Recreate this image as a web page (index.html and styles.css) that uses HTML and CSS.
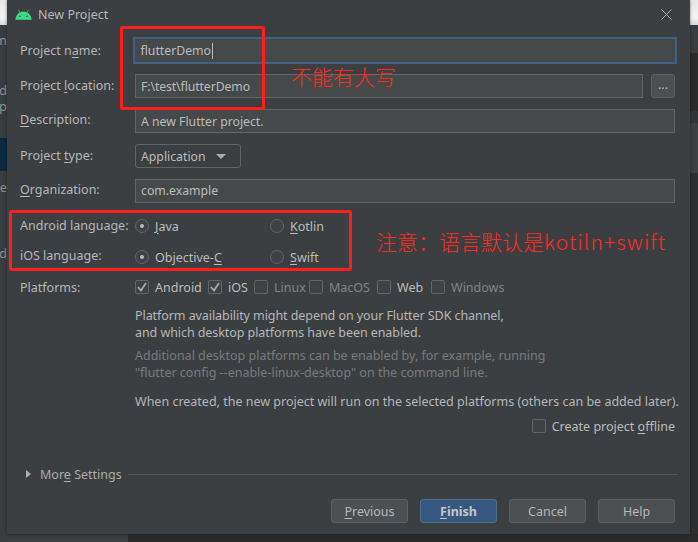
FILE: index.html
```html
<!DOCTYPE html>
<html lang="en">
<head>
<meta charset="utf-8">
<title>New Project</title>
<link rel="stylesheet" href="styles.css">
</head>
<body>
<div class="backdrop">
  <div class="strip strip-left">
    <div class="band band-light"></div>
    <div class="band band-a"><span class="clip c1">m</span></div>
    <div class="band band-b"><span class="clip c2">d</span><span class="clip c3">ip</span></div>
    <div class="band band-sel"></div>
    <div class="band band-c"><span class="clip c4">e</span><span class="clip c5">d</span></div>
  </div>
  <div class="strip strip-right">
    <div class="band band-light"></div>
    <div class="band r1"></div>
    <div class="band r2"></div>
    <div class="band r3"></div>
    <div class="band r4"></div>
    <div class="band r5"></div>
  </div>
  <div class="strip-bottom"></div>
</div>

<main class="dialog">
  <header class="titlebar">
    <svg class="android" width="17" height="11" viewBox="0 0 17 11"><path fill="#3ddc84" d="M0.3 10.8C0.6 7.6 2.2 5 4.7 3.6L3.3 1.1 3.8 0.8 5.3 3.3C6.3 2.9 7.4 2.6 8.5 2.6S10.7 2.9 11.7 3.3L13.2 0.8 13.7 1.1 12.3 3.6C14.8 5 16.4 7.6 16.7 10.8Z"/><circle cx="5" cy="7.2" r=".8" fill="#3c3f41"/><circle cx="12" cy="7.2" r=".8" fill="#3c3f41"/></svg>
    <span class="title">New Project</span>
    <svg class="close" width="11" height="11" viewBox="0 0 11 11"><path d="M.5.5l10 10M10.5.5l-10 10" stroke="#a4a6a8" stroke-width="1" fill="none"/></svg>
  </header>

  <div class="form">
    <div class="row row-name">
      <label class="label">Project n<u>a</u>me:</label>
      <div class="field field-focus"><span class="value">flutterDemo</span><span class="caret"></span></div>
    </div>
    <div class="row row-loc">
      <label class="label">Project <u>l</u>ocation:</label>
      <div class="with-browse">
        <div class="field"><span class="value value-path">F:\test\flutterDemo</span></div>
        <button class="browse">...</button>
      </div>
    </div>
    <div class="row row-std">
      <label class="label label-up"><u>D</u>escription:</label>
      <div class="field"><span class="value">A new Flutter project.</span></div>
    </div>
    <div class="row row-std">
      <label class="label">Project <u>t</u>ype:</label>
      <div class="combo"><span class="value">Application</span><span class="arrow"></span></div>
    </div>
    <div class="row row-std">
      <label class="label label-up"><u>O</u>rganization:</label>
      <div class="field field-up"><span class="value">com.example</span></div>
    </div>
    <div class="row row-radio">
      <label class="label">Android language:</label>
      <div class="radios">
        <span class="radio"><i class="dot on"></i><span><u>J</u>ava</span></span>
        <span class="radio"><i class="dot"></i><span><u>K</u>otlin</span></span>
      </div>
    </div>
    <div class="row row-radio2">
      <label class="label label-up">iOS language:</label>
      <div class="radios">
        <span class="radio"><i class="dot on"></i><span>Objective-<u>C</u></span></span>
        <span class="radio"><i class="dot"></i><span><u>S</u>wift</span></span>
      </div>
    </div>
    <div class="row row-plat">
      <label class="label label-down">Platforms:</label>
      <div class="checks">
        <span class="check"><i class="box"><svg width="14" height="14" viewBox="0 0 14 14"><path d="M3 7l3 3.5L11 3" stroke="#a9abad" stroke-width="1.7" fill="none"/></svg></i>Android</span>
        <span class="check"><i class="box"><svg width="14" height="14" viewBox="0 0 14 14"><path d="M3 7l3 3.5L11 3" stroke="#a9abad" stroke-width="1.7" fill="none"/></svg></i>iOS</span>
        <span class="check muted-check"><i class="box"></i>Linux</span>
        <span class="check muted-check"><i class="box"></i>MacOS</span>
        <span class="check"><i class="box"></i>Web</span>
        <span class="check muted-check"><i class="box"></i>Windows</span>
      </div>
    </div>
    <div class="notes">
      <p class="note note-first">Platform availability might depend on your Flutter SDK channel,<br>and which desktop platforms have been enabled.</p>
      <p class="note note-dim">Additional desktop platforms can be enabled by, for example, running<br>"flutter config --enable-linux-desktop" on the command line.</p>
      <p class="note note-wide">When created, the new project will run on the selected platforms (others can be added later).</p>
    </div>
    <div class="offline"><span class="check"><i class="box"></i><span>Create project <u>o</u>ffline</span></span></div>
  </div>

  <div class="more">
    <span class="tri"></span>
    <span class="more-text">Mor<u>e</u> Settings</span>
    <span class="rule"></span>
  </div>

  <footer class="actions">
    <button class="btn"><u>P</u>revious</button>
    <button class="btn btn-primary"><u>F</u>inish</button>
    <button class="btn">Cancel</button>
    <button class="btn">Help</button>
  </footer>
</main>

<div class="mark mark-one"></div>
<div class="mark mark-two"></div>
<div class="note-red note-one">不能有大写</div>
<div class="note-red note-two">注意：语言默认是<span class="note-latin">kotiln+swift</span></div>
</body>
</html>
```

FILE: styles.css
```css
* { box-sizing: border-box; }
html, body { margin: 0; height: 100%; }
body {
  position: relative;
  width: 698px;
  height: 542px;
  overflow: hidden;
  padding: 0 8px 8px 7px;
  background: #2b2b2b;
  font: 12.5px/17px "Noto Sans", sans-serif;
  color: #bbbbbb;
}
u { text-underline-offset: 2px; text-decoration-thickness: 1px; }
i { font-style: normal; }

/* window behind the dialog */
.backdrop { position: absolute; inset: 0; }
.strip { position: absolute; top: 0; bottom: 8px; width: 8px; display: flex; flex-direction: column; overflow: hidden; }
.strip-left { left: 0; }
.strip-right { right: 0; }
.band { position: relative; flex: none; }
.band-light { height: 25px; background: linear-gradient(#e8e8e8, #f4f4f4 70%, #d9d9d9); }
.band-a { height: 53px; background: #3a3d3f; }
.band-b { height: 60px; background: #3a3d3f; }
.band-sel { height: 33px; background: #0d293e; }
.band-c { flex: 1; background: #3a3d3f; }
.clip { position: absolute; right: 1px; font-size: 13px; line-height: 13px; color: #8d8f91; }
.c1 { top: 9px; }
.c2 { top: 6px; }
.c3 { top: 22px; }
.c4 { top: 10px; }
.c5 { top: 76px; }
.r1 { height: 28px; background: #3a3d3f; }
.r2 { height: 58px; background: #2b2b2b; }
.r3 { height: 12px; background: #323537; }
.r4 { height: 50px; background: #3d4042; }
.r5 { flex: 1; background: #2e2f31; }
.strip-bottom { position: absolute; left: 0; bottom: 0; width: 128px; height: 8px; background: #3a3d3f; }

/* dialog */
.dialog {
  position: relative;
  height: 534px;
  background: #3c3f41;
  box-shadow: 0 0 3px rgba(0, 0, 0, .45);
  display: flex;
  flex-direction: column;
}
.titlebar { height: 37px; padding: 9px 18px 0 8px; display: flex; align-items: flex-start; flex: none; }
.title { margin: -3px 0 0 6px; color: #b4b6b8; }
.close { margin-left: auto; }

.form { padding: 0 15px 0 13px; flex: none; }
.row { display: grid; grid-template-columns: 115px 1fr; align-items: center; }
.row-name { height: 27px; margin-right: -2px; }
.row-loc { height: 24px; margin-top: 10px; }
.row-std { height: 24px; margin-top: 11px; }
.row-radio { height: 24px; margin-top: 11px; }
.row-radio2 { height: 24px; margin-top: 7px; }
.row-plat { height: 24px; margin-top: 6px; }
.label { white-space: nowrap; color: #b4b6b8; margin-top: -1px; }
.label-up { margin-top: -3px; }
.label-down { margin-top: 1px; }

.field {
  height: 24px;
  display: flex;
  align-items: center;
  padding: 0 5px;
  background: #45494a;
  border: 1px solid #646464;
  flex: 1;
}
.field-focus { height: 27px; margin-left: -2px; border: 2.5px solid #3d6185; padding-left: 5.5px; }
.field-up { padding-bottom: 2px; }
.value { white-space: nowrap; color: #bbbbbb; font-size: 12.25px; }
.value-path { letter-spacing: -.1px; }
.caret { width: 1px; height: 16px; background: #bbbbbb; margin-left: 1px; }
.with-browse { display: flex; gap: 8px; }
.browse {
  width: 24px;
  height: 24px;
  padding: 0 0 4px;
  font: inherit;
  color: #bbbbbb;
  background: #4c5052;
  border: 1px solid #5e6060;
  border-radius: 3px;
}
.combo {
  width: 106px;
  height: 24px;
  display: flex;
  align-items: center;
  justify-content: space-between;
  padding: 0 14px 0 5px;
  background: #3c3f41;
  border: 1px solid #646464;
  border-radius: 3px;
}
.arrow { width: 0; height: 0; border: 5px solid transparent; border-top: 5px solid #a9abad; border-bottom: 0; }

.radios { display: grid; grid-template-columns: 135px 1fr; }
.radio { display: flex; align-items: center; gap: 6px; }
.dot {
  width: 14px;
  height: 14px;
  flex: none;
  border: 1px solid #646464;
  border-radius: 50%;
  background: #3f4244;
  display: flex;
  align-items: center;
  justify-content: center;
}
.dot.on::after { content: ""; width: 4px; height: 4px; border-radius: 50%; background: #bbbbbb; }

.checks { display: flex; }
.check { display: flex; align-items: center; gap: 6px; white-space: nowrap; }
.checks .check:nth-child(1) { width: 73px; }
.checks .check:nth-child(2) { width: 46px; }
.checks .check:nth-child(3) { width: 55px; }
.checks .check:nth-child(4) { width: 68px; }
.checks .check:nth-child(5) { width: 54px; }
.box { width: 14px; height: 14px; flex: none; background: #3f4244; border: 1px solid #646464; border-radius: 2px; display: block; }
.box svg { display: block; margin: -1px; }
.muted-check { color: #808283; }

.notes { margin: 7.5px -4px 0 115px; }
.note { margin: 0 0 6px; white-space: nowrap; color: #b4b6b8; }
.note-first { letter-spacing: -.07px; }
.note-dim { color: #787a7c; margin-bottom: 12px; }
.note-wide { margin-bottom: 0; }
.offline { display: flex; justify-content: flex-end; margin-top: 8px; height: 17px; }

.more { display: flex; align-items: center; height: 17px; margin-top: 31px; padding: 0 12px 0 19px; flex: none; }
.tri { width: 0; height: 0; border: 4.5px solid transparent; border-left: 5px solid #a9abad; border-right: 0; }
.more-text { margin: 0 6px 0 9px; white-space: nowrap; color: #a9abad; }
.rule { flex: 1; height: 1px; background: #515456; }

.actions { display: flex; justify-content: flex-end; gap: 12px; margin-top: 16px; padding-right: 15px; flex: none; }
.btn {
  width: 77px;
  height: 24px;
  padding: 1px 0 0;
  font: inherit;
  color: #b4b6b8;
  background: #4c5052;
  border: 1px solid #5e6060;
  border-radius: 3px;
}
.btn-primary { background: #365880; border-color: #4c708c; font-weight: 700; color: #c4c6c8; }

/* red annotations drawn over the screenshot */
.mark { position: absolute; border: 3px solid #ff1e1e; border-radius: 3px; }
.mark-one { left: 120px; top: 26px; width: 145px; height: 84px; }
.mark-two { left: 9px; top: 210px; width: 343px; height: 61px; }
.note-red {
  position: absolute;
  white-space: nowrap;
  color: #ff2a1f;
  font: 300 21px/26px "Noto Sans CJK SC", "Noto Sans", sans-serif;
}
.note-latin { letter-spacing: 1.05px; }
.note-one { left: 291px; top: 63px; }
.note-two { left: 376px; top: 228px; }
```
